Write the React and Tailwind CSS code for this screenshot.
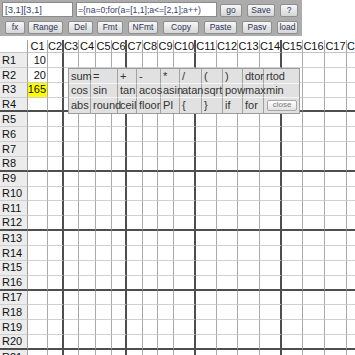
import React from "react";

// toolbar button
function Btn({ w, ml, children }) {
  return (
    <button
      className={`${w} ${ml} h-[13px] shrink-0 flex items-center justify-center rounded-[2px] border border-[#8e8e8e] bg-linear-to-b from-[#f7f7f7] to-[#d6d6d6] text-[8.5px] leading-none text-[#2a3558]`}
    >
      {children}
    </button>
  );
}

function Toolbar() {
  return (
    <div className="w-[302px] h-[36px] bg-[#acacac] pl-[2px] pt-[2px]">
      <div className="flex items-end h-[15px]">
        <input
          readOnly
          value="[3,1][3,1]"
          className="w-[71px] h-[15px] px-[2px] border border-[#8a8a8a] bg-white text-[9.5px] text-[#36426c] outline-none"
        />
        <input
          readOnly
          value="={na=0;for(a=[1,1];a<=[2,1];a++)"
          className="ml-[3px] w-[141px] h-[15px] pl-[1px] pr-0 border border-[#8a8a8a] bg-white text-[8.7px] tracking-[-0.05px] text-[#36426c] outline-none"
        />
        <Btn w="w-[22px]" ml="ml-[3px]">go</Btn>
        <Btn w="w-[28px]" ml="ml-[5px]">Save</Btn>
        <Btn w="w-[18px]" ml="ml-[5px]">?</Btn>
      </div>
      <div className="flex mt-[4px] h-[13px]">
        <Btn w="w-[20px]" ml="ml-[3px]">fx</Btn>
        <Btn w="w-[35px]" ml="ml-[3px]">Range</Btn>
        <Btn w="w-[25px]" ml="ml-[5px]">Del</Btn>
        <Btn w="w-[26px]" ml="ml-[4px]">Fmt</Btn>
        <Btn w="w-[30px]" ml="ml-[5px]">NFmt</Btn>
        <Btn w="w-[36px]" ml="ml-[5px]">Copy</Btn>
        <Btn w="w-[33px]" ml="ml-[5px]">Paste</Btn>
        <Btn w="w-[30px]" ml="ml-[5px]">Pasv</Btn>
        <Btn w="w-[21px]" ml="ml-[5px]">load</Btn>
      </div>
    </div>
  );
}

const NCOLS = 18;
const NROWS = 24;
const values = { "1,1": "10", "2,1": "20", "3,1": "165" };

const vline = (c) =>
  c % 4 === 2 ? "border-r-2 border-r-[#4e4e4e]" : "border-r border-r-[#aaaaaa]";
const hline = (r) =>
  r % 4 === 0 ? "border-b-2 border-b-[#4e4e4e]" : "border-b border-b-[#d0d0d0]";

function Sheet() {
  const cols = Array.from({ length: NCOLS }, (_, i) => i + 1);
  const rows = Array.from({ length: NROWS }, (_, i) => i + 1);
  return (
    <div className="mt-[4px] grid grid-cols-[28px_20px_16px_15px_17px_16px_15px_16px_15px_16px_22px_21px_21px_22px_22px_21px_22px_22px_22px] text-[11px] text-[#111]">
      <div className="h-[13px] border-r border-r-[#a0a0a0] border-b border-b-[#c4c4c4] bg-white" />
      {cols.map((c) => (
        <div
          key={c}
          className={`h-[13px] flex items-center justify-center overflow-hidden whitespace-nowrap bg-white border-b border-b-[#c4c4c4] ${vline(c)}`}
        >
          C{c}
        </div>
      ))}
      {rows.map((r) => (
        <React.Fragment key={r}>
          <div
            className={`h-[14.85px] flex items-center pl-[2px] bg-[#ececec] border-r border-r-[#a0a0a0] ${hline(r)}`}
          >
            R{r}
          </div>
          {cols.map((c) => {
            const v = values[`${r},${c}`];
            const hi = r === 3 && c === 1;
            return (
              <div
                key={c}
                className={`h-[14.85px] flex items-center justify-end pr-[1px] overflow-hidden ${hi ? "bg-[#ffff00]" : "bg-white"} ${vline(c)} ${hline(r)}`}
              >
                {v}
              </div>
            );
          })}
        </React.Fragment>
      ))}
    </div>
  );
}

const palette = [
  ["sum", "=", "+", "-", "*", "/", "(", ")", "dtor", "rtod"],
  ["cos", "sin", "tan", "acos", "asin", "atan", "sqrt", "pow", "max", "min"],
  ["abs", "round", "ceil", "floor", "PI", "{", "}", "if", "for", null],
];

function FuncPalette() {
  return (
    <div className="absolute left-[68px] top-[68px] border border-[#9c9c9c] bg-[#e1e1e1] text-[11px] text-[#333]">
      <div className="grid grid-cols-[22px_27px_19px_24px_19px_22px_21px_20px_21px_35px]">
        {palette.map((row, ri) =>
          row.map((f, ci) => (
            <div
              key={`${ri}-${ci}`}
              className={`h-[14.5px] flex items-center pl-[2px] whitespace-nowrap ${ci < 9 ? "border-r border-r-[#a2a2a2]" : ""} ${ri < 2 ? "border-b border-b-[#f6f6f6]" : ""}`}
            >
              {f === null ? (
                <button className="ml-[1px] w-[30px] h-[11px] flex items-center justify-center rounded-[2px] border border-[#a8a8a8] bg-linear-to-b from-white to-[#e2e2e2] text-[8px] leading-none text-[#777]">
                  close
                </button>
              ) : (
                f
              )}
            </div>
          ))
        )}
      </div>
    </div>
  );
}

export default function App() {
  return (
    <div className="relative w-[355px] h-[355px] overflow-hidden bg-white font-['Liberation_Sans',Arial,sans-serif]">
      <Toolbar />
      <Sheet />
      <FuncPalette />
    </div>
  );
}
